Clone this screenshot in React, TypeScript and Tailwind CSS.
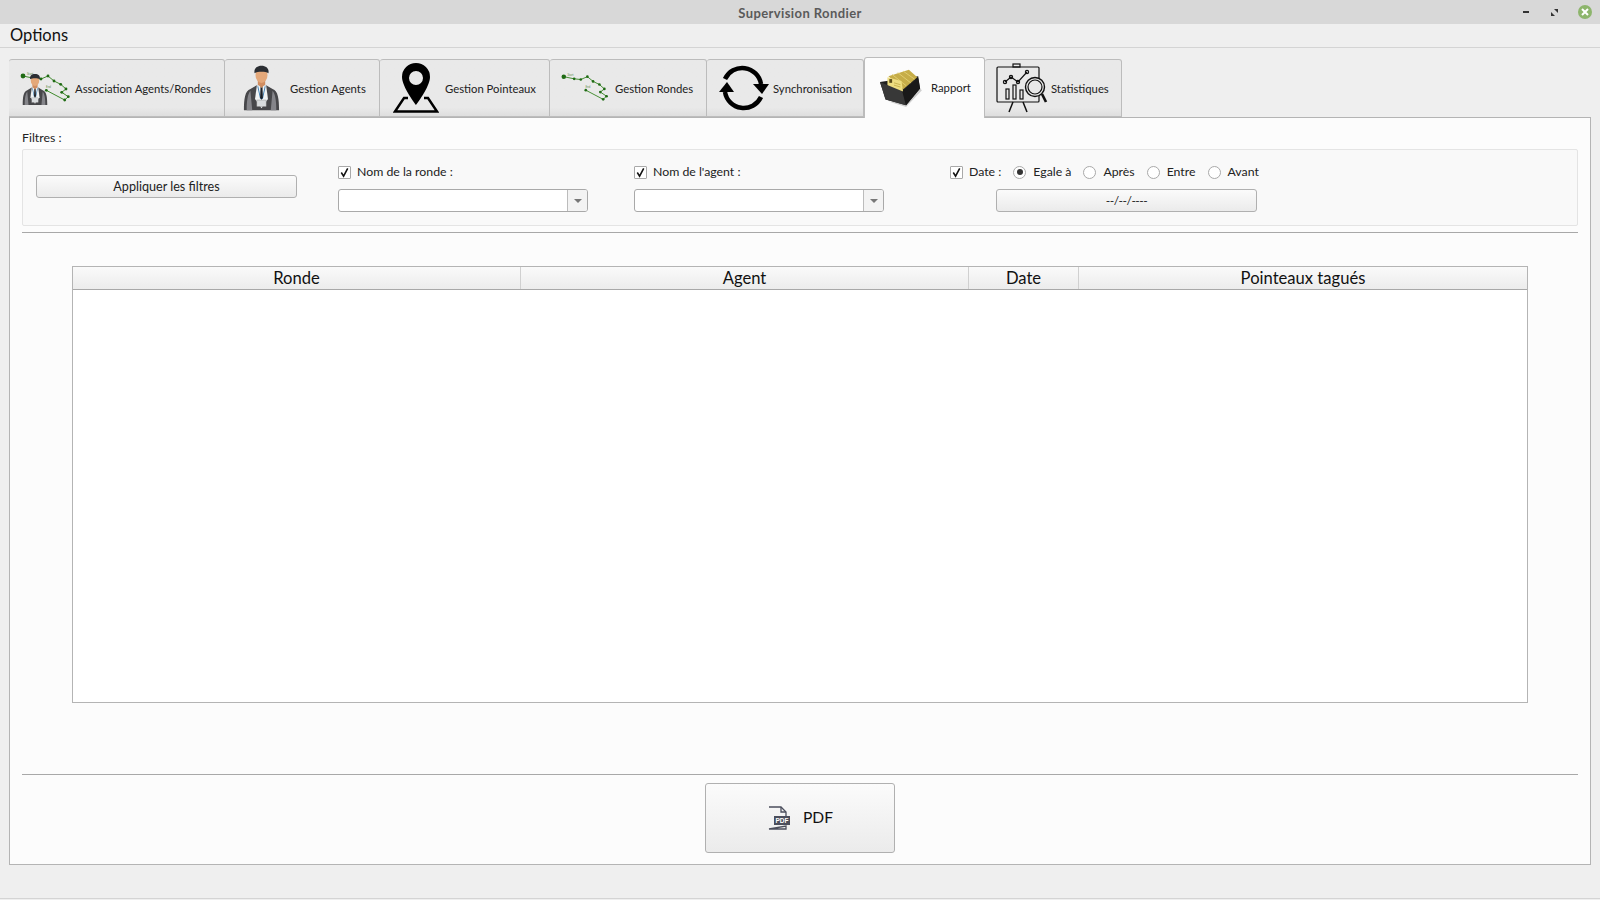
const font = { fontFamily: '"Lato", "Noto Sans", sans-serif' };

function AgentIcon({ className }: { className: string }) {
  return (
    <svg viewBox="0 0 40 48" className={className}>
      <path d="M1 48 C1 36 2 27 8 25 L15 21 L25 21 L32 25 C38 27 39 36 39 48 Z" fill="#47474a" />
      <path d="M4 48 C4 38 5 31 8 27 L10 48 Z M36 48 C36 38 35 31 32 27 L30 48 Z" fill="#85858a" />
      <path d="M15 21 L25 21 L27 36 L20 46 L13 36 Z" fill="#f1f3f4" />
      <path d="M15.5 22 L16.5 22 L19.5 36 L18.5 36 Z M24.5 22 L23.5 22 L20.5 36 L21.5 36 Z" fill="#3d7db0" />
      <path d="M19 22 L21 22 L21.5 34 L20 37 L18.5 34 Z" fill="#1b1f26" />
      <path d="M16 14 L24 14 L24 20 L20 24 L16 20 Z" fill="#d08d61" />
      <ellipse cx="20" cy="10" rx="6.5" ry="8.5" fill="#e4a87a" />
      <path d="M12.5 8 C11.5 3 15 0 20 0 C25 0 28.5 3 27.5 8 C24 6 16 6 12.5 8 Z" fill="#2b2e33" />
      <rect x="15" y="37" width="10" height="7" fill="#d9dcde" stroke="#8b8b8b" strokeWidth="0.5" />
    </svg>
  );
}

function RouteIcon({ className }: { className: string }) {
  const pts = [[15, 8.3], [22, 9], [29, 6], [35, 11], [41.7, 14.3], [47, 19], [42.7, 22.3], [49.3, 26.7], [45.7, 30], [27.3, 20.3]];
  return (
    <svg viewBox="0 0 54 36" className={className}>
      <polyline points={"4,6 " + pts.map((p) => p.join(",")).join(" ")} fill="none" stroke="#3f8a2c" strokeWidth="1" />
      <circle cx="4" cy="6" r="2.4" fill="#1f6b14" />
      {pts.map((p) => (
        <circle key={p.join()} cx={p[0]} cy={p[1]} r="1.4" fill="#1f6b14" />
      ))}
      <text x="8" y="5" fontSize="3" fill="#5c8a4c">Start</text>
      <text x="27" y="18" fontSize="3" fill="#5c8a4c">End</text>
    </svg>
  );
}

function AssocIcon() {
  return (
    <div className="relative w-[54px] h-[36px]">
      <RouteIcon className="w-[54px] h-[36px]" />
      <div className="absolute left-[3px] top-[4px]">
        <AgentIcon className="w-[26px] h-[31px]" />
      </div>
    </div>
  );
}

function PinIcon({ className }: { className: string }) {
  return (
    <svg viewBox="0 0 46 51" className={className}>
      <path
        fillRule="evenodd"
        d="M23 1 a14 14 0 0 1 14 14 c0 10 -14 28 -14 28 s-14 -18 -14 -28 a14 14 0 0 1 14 -14 z M23 9 a7 7 0 1 0 0 14 a7 7 0 0 0 0 -14 z"
        fill="#000"
      />
      <path d="M15 36 L11 36 L2 49.5 H44 L35 36 H31" fill="none" stroke="#000" strokeWidth="2.4" />
    </svg>
  );
}

function SyncIcon({ className }: { className: string }) {
  return (
    <svg viewBox="0 0 52 46" className={className}>
      <path d="M7 14 A19 19 0 0 1 43 19" fill="none" stroke="#000" strokeWidth="4.5" />
      <polygon points="35,19 51,19 44,29" fill="#000" />
      <path d="M43 32 A19 19 0 0 1 7 27" fill="none" stroke="#000" strokeWidth="4.5" />
      <polygon points="1,27 16,27 9,17" fill="#000" />
    </svg>
  );
}

function DrawerIcon({ className }: { className: string }) {
  return (
    <svg viewBox="0 0 46 44" className={className}>
      <polygon points="10,37 29,43 46,25 44,23 29,39" fill="#cfcfcf" />
      <polygon points="1,16 42,10 44,23 29,41 7,35" fill="#1f1f1f" />
      <polygon points="10,10 32,3 41,11 26,24" fill="#c6ad48" />
      <path d="M14 8 L29 20 M20 6 L34 17 M26 4.5 L38 13" stroke="#e2cf70" strokeWidth="1" fill="none" />
      <polygon points="9,11 24,15 26,27 9,21" fill="#eedd80" />
      <rect x="11" y="13" width="3" height="4" fill="#5a4b18" />
      <path d="M16 17 L23 19 M16 19.5 L23 21.5" stroke="#bda640" strokeWidth="0.8" />
      <polygon points="1,16 25,26 29,41 7,35" fill="#383838" />
      <polygon points="25,26 42,12 44,23 29,41" fill="#191919" />
    </svg>
  );
}

function StatsIcon({ className }: { className: string }) {
  return (
    <svg viewBox="0 0 54 52" className={className} fill="none" stroke="#111" strokeWidth="1.2">
      <rect x="2" y="5" width="42" height="35" rx="1" />
      <rect x="18" y="2" width="7" height="3" />
      <path d="M18 40 L14 50 M28 40 L32 50" strokeWidth="1.5" />
      <path d="M10 20 L16 15 L23 20 L32 10" />
      <circle cx="10" cy="20" r="1.6" />
      <circle cx="16" cy="15" r="1.6" />
      <circle cx="23" cy="20" r="1.6" />
      <circle cx="32" cy="10" r="1.6" />
      <rect x="11" y="27" width="3" height="10" />
      <rect x="18" y="23" width="3" height="14" />
      <rect x="25" y="28" width="3" height="9" />
      <circle cx="40" cy="25" r="9.5" fill="#e8e8e8" strokeWidth="1.4" />
      <circle cx="40" cy="25" r="7" />
      <path d="M47 32 L51 40" strokeWidth="2.6" />
    </svg>
  );
}

function PdfIcon({ className }: { className: string }) {
  return (
    <svg viewBox="0 0 24 24" className={className}>
      <path d="M2 1 H14 L19 6 V10 M19 20 V23 H2 Z" fill="none" stroke="#4b4e5c" strokeWidth="1.3" />
      <path d="M14 1 V6 H19" fill="none" stroke="#4b4e5c" strokeWidth="1.3" />
      <rect x="7" y="10" width="16" height="9" fill="#4b4e5c" />
      <text x="15" y="17" textAnchor="middle" fontSize="6.5" fontWeight="700" fill="#fff" fontFamily="Liberation Sans, sans-serif">PDF</text>
    </svg>
  );
}

function Tab({ className, label, icon, active }: { className: string; label: string; icon: React.ReactNode; active?: boolean }) {
  return (
    <div
      className={
        "flex items-center border border-[#bcbcbc] rounded-t-[3px] text-[11.3px] text-[#222] " +
        (active
          ? "h-[61px] bg-[#fcfcfc] border-b-0 pb-[2px] "
          : "h-[58px] bg-gradient-to-b from-[#e9e9e9] via-[#e9e9e9] via-[85%] to-[#dedede] border-l-0 ") +
        className
      }
    >
      {icon}
      <span className="whitespace-nowrap mt-[2px]">{label}</span>
    </div>
  );
}

function Check({ label }: { label: string }) {
  return (
    <div className="flex items-center gap-[6px] h-[14px] text-[12.3px] text-[#222]">
      <div className="w-[13px] h-[13px] border border-[#a9a9a9] bg-white rounded-[1px] flex items-center justify-center">
        <svg viewBox="0 0 12 12" className="w-[11px] h-[11px]">
          <path d="M2.5 6 L5 10 L9.5 1.5" fill="none" stroke="#111" strokeWidth="1.7" />
        </svg>
      </div>
      <span className="whitespace-nowrap mt-px">{label}</span>
    </div>
  );
}

function Radio({ label, on, className }: { label: string; on?: boolean; className: string }) {
  return (
    <div className={"flex items-center gap-[7px] text-[12.3px] text-[#222] " + className}>
      <div className="w-[13px] h-[13px] rounded-full border border-[#a9a9a9] bg-white flex items-center justify-center">
        {on && <div className="w-[6px] h-[6px] rounded-full bg-[#333]" />}
      </div>
      <span className="whitespace-nowrap mt-px">{label}</span>
    </div>
  );
}

function Combo() {
  return (
    <div className="mt-[10px] w-[250px] h-[23px] border border-[#a9a9a9] rounded-[3px] bg-white flex justify-end overflow-hidden">
      <div className="w-[20px] border-l border-[#bcbcbc] bg-[#f3f3f3] flex items-center justify-center">
        <div className="w-0 h-0 border-l-[4px] border-r-[4px] border-t-[4px] border-l-transparent border-r-transparent border-t-[#777]" />
      </div>
    </div>
  );
}

const btn = "border border-[#b0b0b0] rounded-[3px] bg-gradient-to-b from-[#fbfbfb] to-[#ebebeb] flex items-center justify-center text-[#222]";
const head = "flex items-center justify-center h-[22px] leading-[20px] pb-px text-[16.6px] text-[#111] border-r border-[#d0d0d0]";

export default function App() {
  return (
    <div className="w-[1600px] h-[900px] flex flex-col bg-[#efefef] overflow-hidden" style={font}>
      {/* title bar */}
      <div className="h-[24px] bg-[#d8d8d8] flex items-center shrink-0">
        <div className="w-[100px]" />
        <div className="flex-1 text-center text-[13px] font-bold text-[#5a5a5a] tracking-[0.4px] pt-[3px]">Supervision Rondier</div>
        <div className="w-[100px] flex items-center justify-end pr-[8px]">
          <div className="w-[6px] h-[2px] bg-[#333] mr-[22px]" />
          <svg viewBox="0 0 7 7" className="w-[7px] h-[7px] mr-[20px]">
            <path d="M3 0 H7 V4 Z M0 3 V7 H4 Z" fill="#333" />
          </svg>
          <div className="w-[14px] h-[14px] rounded-full bg-[#8db56c] flex items-center justify-center">
            <svg viewBox="0 0 8 8" className="w-[8px] h-[8px]">
              <path d="M1 1 L7 7 M7 1 L1 7" stroke="#fff" strokeWidth="2" />
            </svg>
          </div>
        </div>
      </div>

      {/* menu */}
      <div className="h-[24px] border-b border-[#d4d4d4] pl-[10px] flex items-center text-[16.5px] text-[#111] shrink-0">Options</div>

      {/* tabs */}
      <div className="h-[70px] flex items-end pl-[9px] shrink-0 relative z-10 -mb-px">
        <Tab className="w-[216px] border-l pl-[10px] gap-[2px] mb-px" label="Association Agents/Rondes" icon={<AssocIcon />} />
        <Tab className="w-[155px] pl-[18px] gap-[10px] mb-px" label="Gestion Agents" icon={<AgentIcon className="w-[37px] h-[48px]" />} />
        <Tab className="w-[170px] pl-[13px] gap-[6px] mb-px" label="Gestion Pointeaux" icon={<PinIcon className="w-[46px] h-[51px] -mt-[2px]" />} />
        <Tab className="w-[157px] pl-[10px] gap-[4px] mb-px" label="Gestion Rondes" icon={<RouteIcon className="w-[51px] h-[34px]" />} />
        <Tab className="w-[157px] pl-[11px] gap-[3px] mb-px" label="Synchronisation" icon={<SyncIcon className="w-[52px] h-[46px]" />} />
        <Tab active className="w-[121px] pl-[14px] gap-[9px]" label="Rapport" icon={<DrawerIcon className="w-[43px] h-[41px]" />} />
        <Tab className="w-[137px] pl-[10px] gap-[2px] mb-px" label="Statistiques" icon={<StatsIcon className="w-[54px] h-[52px]" />} />
      </div>

      {/* panel */}
      <div className="ml-[9px] w-[1582px] h-[748px] border border-[#b4b4b4] bg-[#fcfcfc] px-[12px] flex flex-col shrink-0">
        <div className="h-[31px] flex items-center text-[12.3px] text-[#222] pt-[10px]">Filtres :</div>

        <div className="h-[77px] border border-[#e4e4e4] rounded-[2px] bg-[#f9f9f9] flex items-start pl-[13px]">
          <div className={btn + " mt-[25px] w-[261px] h-[23px] pt-px text-[12.6px]"}>Appliquer les filtres</div>
          <div className="ml-[41px] mt-[15px] flex flex-col">
            <Check label="Nom de la ronde :" />
            <Combo />
          </div>
          <div className="ml-[46px] mt-[15px] flex flex-col">
            <Check label="Nom de l'agent :" />
            <Combo />
          </div>
          <div className="ml-[66px] mt-[15px] flex flex-col">
            <div className="flex items-center h-[14px]">
              <Check label="Date :" />
              <Radio on label="Egale à" className="ml-[12px]" />
              <Radio label="Après" className="ml-[12px]" />
              <Radio label="Entre" className="ml-[12px]" />
              <Radio label="Avant" className="ml-[12px]" />
            </div>
            <div className={btn + " mt-[10px] ml-[46px] w-[261px] h-[23px] text-[12px] tracking-[-0.5px]"}>--/--/----</div>
          </div>
        </div>

        <div className="mt-[6px] h-px bg-[#a8a8a8] shrink-0" />

        {/* table */}
        <div className="mt-[33px] mx-[50px] h-[437px] border border-[#b4b4b4] bg-white flex flex-col shrink-0">
          <div className="h-[23px] grid grid-cols-[448px_448px_110px_1fr] border-b border-[#a8a8a8] bg-gradient-to-b from-[#fafafa] to-[#ececec]">
            <div className={head}>Ronde</div>
            <div className={head}>Agent</div>
            <div className={head}>Date</div>
            <div className={head + " border-r-0"}>Pointeaux tagués</div>
          </div>
        </div>

        <div className="mt-[71px] h-px bg-[#a8a8a8] shrink-0" />

        <div className="flex justify-center mt-[8px]">
          <div className={btn + " w-[190px] h-[70px] gap-[12px] text-[15.6px] rounded-[2px]"}>
            <PdfIcon className="w-[24px] h-[24px]" />
            <span className="text-[#111]">PDF</span>
          </div>
        </div>
      </div>

      <div className="mt-auto h-px bg-[#d4d4d4] mb-[1px]" />
    </div>
  );
}
